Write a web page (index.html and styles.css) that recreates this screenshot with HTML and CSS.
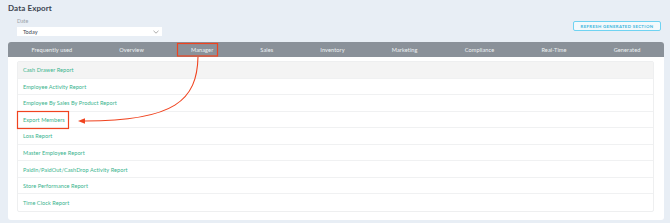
FILE: index.html
```html
<!DOCTYPE html>
<html>
<head>
<meta charset="utf-8">
<link rel="stylesheet" href="styles.css">
</head>
<body>
<div class="page">
  <div class="header">
    <div class="left">
      <h1 class="title">Data Export</h1>
      <div class="field">
        <div class="label">Date</div>
        <div class="select"><span>Today</span>
          <svg class="chev" width="6" height="4" viewBox="0 0 6 4"><path d="M0.5 0.8 L3 3.2 L5.5 0.8" fill="none" stroke="#888" stroke-width="0.7"/></svg>
        </div>
      </div>
    </div>
    <div class="refresh">REFRESH GENERATED SECTION</div>
  </div>
  <div class="card">
    <div class="tabs">
      <div class="tab">Frequently used</div>
      <div class="tab">Overview</div>
      <div class="tab">Manager</div>
      <div class="tab">Sales</div>
      <div class="tab">Inventory</div>
      <div class="tab">Marketing</div>
      <div class="tab">Compliance</div>
      <div class="tab">Real-Time</div>
      <div class="tab">Generated</div>
    </div>
    <div class="body">
      <div class="list">
        <div class="row first">Cash Drawer Report</div>
        <div class="row">Employee Activity Report</div>
        <div class="row">Employee By Sales By Product Report</div>
        <div class="row">Export Members</div>
        <div class="row">Loss Report</div>
        <div class="row">Master Employee Report</div>
        <div class="row">PaidIn/PaidOut/CashDrop Activity Report</div>
        <div class="row">Store Performance Report</div>
        <div class="row last">Time Clock Report</div>
      </div>
    </div>
  </div>
</div>
<svg class="annot" width="670" height="223" viewBox="0 0 670 223">
  <rect x="177.5" y="43.5" width="40" height="12.5" fill="none" stroke="#f0431f" stroke-width="1.2"/>
  <rect x="17.5" y="111.5" width="51" height="17" fill="none" stroke="#f0431f" stroke-width="1.2"/>
  <path d="M198 57 C197 100 175 121 85 121" fill="none" stroke="#f0431f" stroke-width="1.1"/>
  <path d="M78 121 L85 118.2 L85 123.8 Z" fill="#f0431f"/>
</svg>
</body>
</html>
```
FILE: styles.css
```css
html, body {
  margin: 0;
  padding: 0;
}
body {
  background: #e8eef5;
  font-family: "Lato", "Open Sans", sans-serif;
  width: 670px;
  height: 223px;
  overflow: hidden;
  position: relative;
}
.page {
  padding: 4px 6px 0 8px;
}
.header {
  display: flex;
  justify-content: space-between;
  align-items: flex-start;
}
.title {
  margin: 0;
  font-size: 8px;
  font-weight: 700;
  color: #3c4550;
  line-height: 9px;
  letter-spacing: 0.1px;
}
.field {
  margin-left: 9px;
  margin-top: 5px;
}
.label {
  font-size: 5.3px;
  color: #9aa2aa;
  line-height: 6px;
  height: 6px;
}
.select {
  margin-top: 3px;
  width: 145px;
  height: 9px;
  background: #fff;
  box-sizing: border-box;
  display: flex;
  align-items: center;
  justify-content: space-between;
  padding: 0 3px 0 6px;
  font-size: 5.6px;
  color: #3c4550;
}
.chev {
  display: block;
}
.refresh {
  margin-top: 17px;
  margin-right: 3px;
  width: 88px;
  height: 10px;
  box-sizing: border-box;
  border: 1px solid #6fd3f2;
  border-radius: 2px;
  background: #f3f9fc;
  color: #3cb6dd;
  font-size: 4.3px;
  font-weight: 700;
  letter-spacing: 0.35px;
  display: flex;
  align-items: center;
  justify-content: center;
}
.card {
  margin-top: 6px;
  width: 656px;
  background: #fff;
  border-radius: 3px;
}
.tabs {
  display: flex;
  height: 15px;
  background: #8a9199;
  border-radius: 3px 3px 0 0;
}
.tab {
  flex: 1 1 auto;
  display: flex;
  align-items: center;
  justify-content: center;
  color: #eef1f4;
  font-size: 5.6px;
  letter-spacing: 0.1px;
}
.body {
  padding: 4px 10px 8px 9px;
}
.list {
  border: 1px solid #eeeff0;
  border-radius: 2px;
}
.row {
  height: 16.55px;
  box-sizing: border-box;
  border-bottom: 1px solid #f0f1f2;
  display: flex;
  align-items: center;
  padding-left: 5px;
  font-size: 5.6px;
  color: #39b48e;
  letter-spacing: 0.05px;
}
.row.first {
  background: #f4f4f4;
}
.row.last {
  border-bottom: none;
}
.annot {
  position: absolute;
  left: 0;
  top: 0;
  pointer-events: none;
}
```
